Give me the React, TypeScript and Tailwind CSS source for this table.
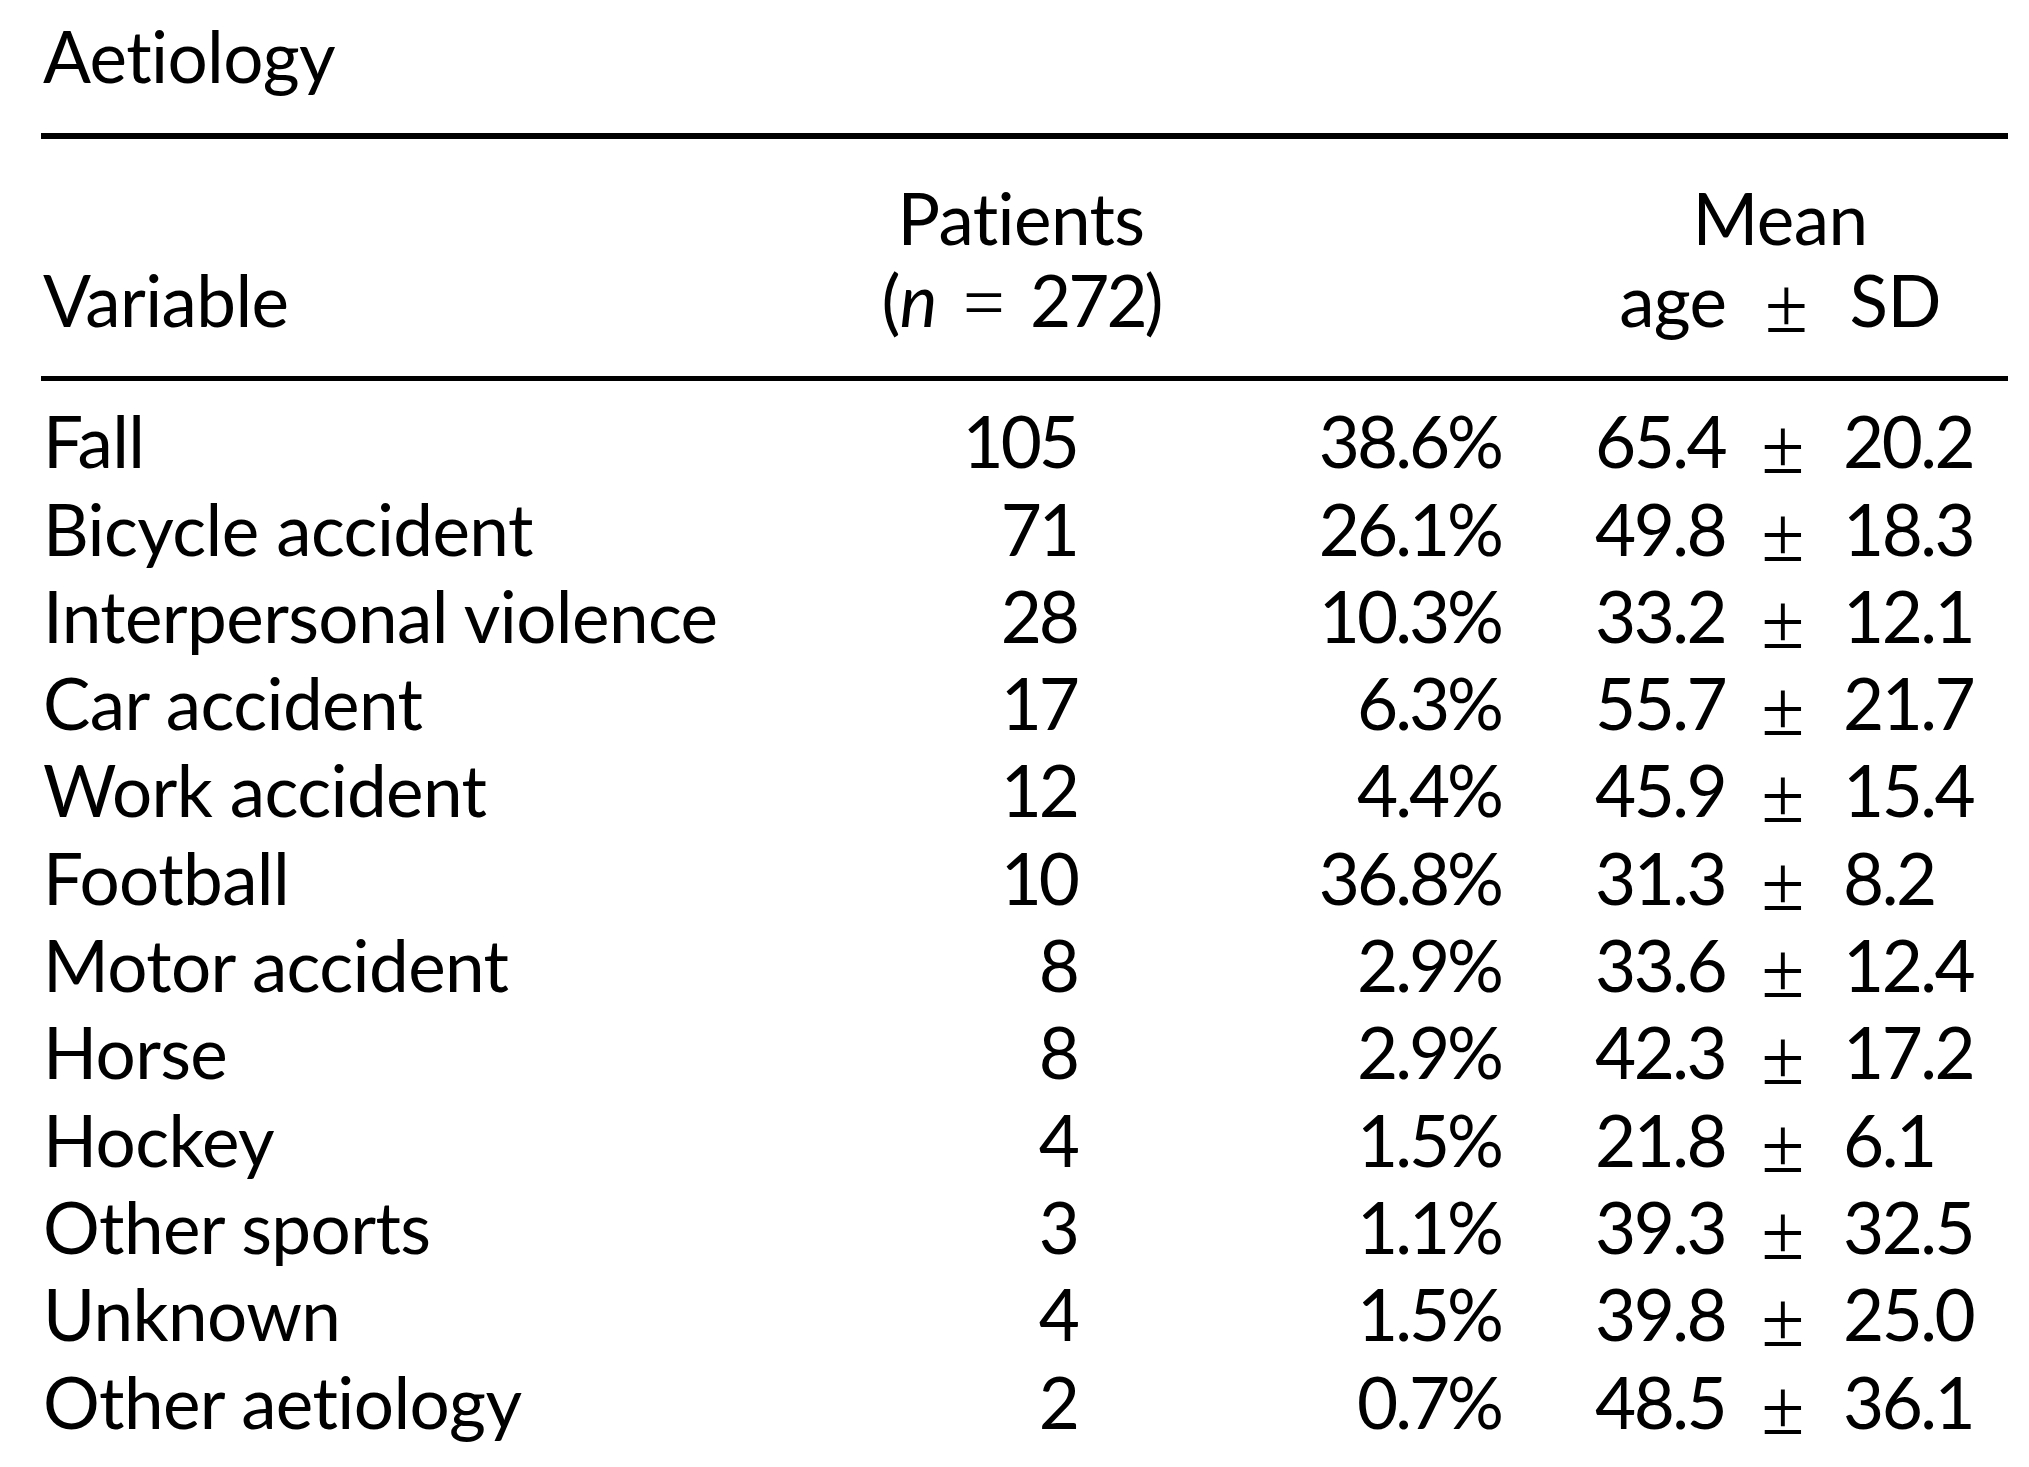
const rows = [
  { name: "Fall", n: "105", pct: "38.6%", mean: "65.4", sd: "20.2" },
  { name: "Bicycle accident", n: "71", pct: "26.1%", mean: "49.8", sd: "18.3" },
  { name: "Interpersonal violence", n: "28", pct: "10.3%", mean: "33.2", sd: "12.1" },
  { name: "Car accident", n: "17", pct: "6.3%", mean: "55.7", sd: "21.7" },
  { name: "Work accident", n: "12", pct: "4.4%", mean: "45.9", sd: "15.4" },
  { name: "Football", n: "10", pct: "36.8%", mean: "31.3", sd: "8.2" },
  { name: "Motor accident", n: "8", pct: "2.9%", mean: "33.6", sd: "12.4" },
  { name: "Horse", n: "8", pct: "2.9%", mean: "42.3", sd: "17.2" },
  { name: "Hockey", n: "4", pct: "1.5%", mean: "21.8", sd: "6.1" },
  { name: "Other sports", n: "3", pct: "1.1%", mean: "39.3", sd: "32.5" },
  { name: "Unknown", n: "4", pct: "1.5%", mean: "39.8", sd: "25.0" },
  { name: "Other aetiology", n: "2", pct: "0.7%", mean: "48.5", sd: "36.1" },
];

// math-style sign, thin strokes like the typeset ±
function PlusMinus() {
  return (
    <span
      className="w-[48px] text-center text-[78px] leading-[60px] relative top-[5px] tracking-normal"
      style={{ fontFamily: "'Liberation Serif', serif" }}
    >
      ±
    </span>
  );
}

export default function App() {
  return (
    <main
      className="min-h-screen bg-white text-black pl-[41px] pr-[21px] text-[71px] tracking-[-0.6px]"
      style={{ fontFamily: "Lato, 'Open Sans', sans-serif" }}
    >
      <div className="pt-[12px] pl-[2px] leading-[87.3px]">Aetiology</div>

      <div className="mt-[34px] h-[6px] bg-black" />

      {/* header */}
      <div className="mt-[38px] flex pl-[2px] leading-[82px]">
        <div className="w-[833px] flex flex-col justify-end">Variable</div>
        <div className="w-[290px] flex flex-col items-center">
          <span>Patients</span>
          <span className="h-[82px] flex items-baseline">
            <span>
              (<i>n</i>
            </span>
            <span
              className="mx-[26px] text-[74px] leading-[60px]"
              style={{ fontFamily: "'Liberation Serif', serif" }}
            >
              =
            </span>
            <span className="tracking-[-3px]">272)</span>
          </span>
        </div>
        <div className="w-[414px]" />
        <div className="w-[400px] flex flex-col items-center">
          <span>Mean</span>
          <span className="h-[82px] flex items-baseline">
            <span>age</span>
            <span className="ml-[36px] flex"><PlusMinus /></span>
            <span className="ml-[39px]">SD</span>
          </span>
        </div>
      </div>

      <div className="mt-[35px] h-[5px] bg-black" />

      {/* body */}
      <div className="mt-[16px] pl-[2px] leading-[87.3px]">
        {rows.map((r) => (
          <div key={r.name} className="flex h-[87.3px]">
            <div className="w-[833px]">{r.name}</div>
            <div className="w-[201px] text-right tracking-[-3px]">{r.n}</div>
            <div className="w-[424px] text-right tracking-[-3px]">{r.pct}</div>
            <div className="ml-[94px] flex items-baseline tracking-[-2.5px]">
              <span className="w-[164px]">{r.mean}</span>
              <PlusMinus />
              <span className="ml-[36px]">{r.sd}</span>
            </div>
          </div>
        ))}
      </div>
    </main>
  );
}
